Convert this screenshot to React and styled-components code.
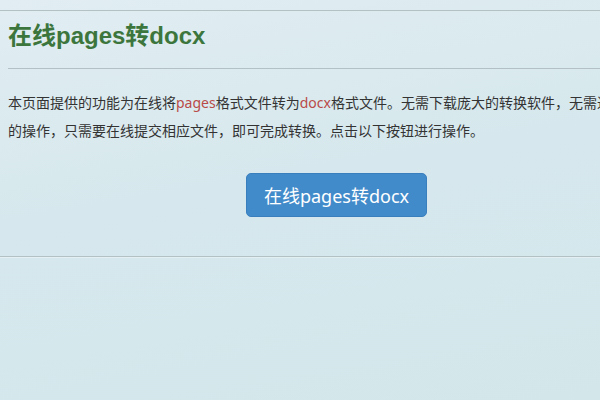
import React from 'react'
import styled, { createGlobalStyle } from 'styled-components'

const GlobalStyle = createGlobalStyle`
    html, body {
        margin: 0;
        padding: 0;
        overflow: hidden;
    }
    body {
        width: 600px;
        height: 400px;
        background: linear-gradient(170deg, #e1edf2 0%, #d6e8ed 45%, #d3e7eb 100%);
        font-family: "Liberation Sans", "Noto Sans CJK SC", sans-serif;
        color: #333;
    }
`

const Page = styled.div`
    padding-top: 10px;
    width: 675px;
`

const Section = styled.section`
    border-top: 1px solid #b3c1c4;
    border-bottom: 1px solid #b3c1c4;
    box-shadow: 0 1px 0 rgba(255, 255, 255, 0.35);
    padding: 0 15px 39px 8px;
`

const Title = styled.h2`
    margin: 0;
    padding: 10px 0 0;
    font-size: 24px;
    line-height: 30px;
    font-weight: 700;
    color: #3c763d;
`

const Rule = styled.hr`
    margin: 17px 0 20px;
    border: 0;
    border-top: 1px solid #b3c1c4;
`

const Intro = styled.p`
    margin: 0;
    font-family: "Noto Sans", "Noto Sans CJK SC", sans-serif;
    font-size: 14px;
    line-height: 28px;
    color: #333;
`

const Mark = styled.span`
    color: #b94a48;
`

const Actions = styled.div`
    display: flex;
    justify-content: center;
    margin-top: 28px;
    padding-left: 5px;
`

const Button = styled.button`
    height: 44px;
    padding: 0 17px;
    border: 1px solid #3a7fbd;
    border-radius: 5px;
    background: #428bca;
    color: #fff;
    font-family: "Noto Sans", "Noto Sans CJK SC", sans-serif;
    font-size: 18px;
    cursor: pointer;
`

const App = () => {
    return (
        <>
            <GlobalStyle />
            <Page>
                <Section>
                    <Title>在线pages转docx</Title>
                    <Rule />
                    <Intro>
                        本页面提供的功能为在线将<Mark>pages</Mark>格式文件转为<Mark>docx</Mark>格式文件。无需下载庞大的转换软件，无需进行复杂的操作，只需要在线提交相应文件，即可完成转换。点击以下按钮进行操作。
                    </Intro>
                    <Actions>
                        <Button>在线pages转docx</Button>
                    </Actions>
                </Section>
            </Page>
        </>
    )
}

export default App
